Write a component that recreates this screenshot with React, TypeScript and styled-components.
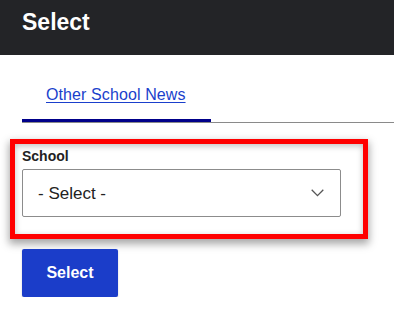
import styled, { createGlobalStyle } from "styled-components";

const GlobalStyle = createGlobalStyle`
  html, body {
    margin: 0;
    padding: 0;
    background: #fff;
    font-family: "Liberation Sans", Arial, sans-serif;
  }
`;

const Header = styled.header`
  box-sizing: border-box;
  height: 55px;
  padding: 9px 22px 0;
  background: #232427;
`;

const Title = styled.h1`
  margin: 0;
  color: #fff;
  font-size: 23px;
  font-weight: 700;
  line-height: 1.15;
`;

const Main = styled.main`
  padding-top: 16px;
`;

const TabList = styled.nav`
  display: flex;
  margin-left: 22px;
  border-bottom: 1px solid #8a8a8a;
`;

const Tab = styled.a<{ active?: boolean }>`
  display: block;
  padding: 12px 25px 12px 24px;
  font-size: 16px;
  line-height: 24px;
  letter-spacing: 0.1px;
  color: #1a3fcc;
  text-decoration: underline;
  text-underline-offset: 2px;
  border-bottom: 3px solid ${(p) => (p.active ? "#00008a" : "transparent")};
  cursor: pointer;
`;

const Highlight = styled.div`
  box-sizing: border-box;
  width: 358px;
  margin: 16px 0 0 10px;
  padding: 2px 22px 17px 7px;
  border: 5px solid #f00;
  box-shadow: 0 4px 8px 1px rgba(0, 0, 0, 0.35),
    inset 0 2px 6px rgba(0, 0, 0, 0.25);
`;

const Label = styled.label`
  display: block;
  margin-bottom: 3px;
  font-size: 14px;
  font-weight: 700;
  line-height: 20px;
  color: #222;
`;

const SelectWrap = styled.div`
  position: relative;
`;

const NativeSelect = styled.select`
  box-sizing: border-box;
  width: 100%;
  height: 48px;
  padding: 0 40px 0 15px;
  border: 1px solid #8c8c8c;
  border-radius: 2px;
  background: #fff;
  appearance: none;
  font-family: "Liberation Sans", Arial, sans-serif;
  font-size: 17px;
  color: #222;
`;

const Chevron = styled.svg`
  position: absolute;
  right: 17px;
  top: 50%;
  margin-top: -4px;
  pointer-events: none;
`;

const Button = styled.button`
  display: block;
  margin: 10px 0 0 22px;
  width: 96px;
  height: 48px;
  padding: 0;
  border: none;
  border-radius: 2px;
  background: #1b3dc9;
  color: #fff;
  font-family: "Liberation Sans", Arial, sans-serif;
  font-size: 16px;
  font-weight: 700;
  box-shadow: 0 1px 2px rgba(0, 0, 0, 0.2);
  cursor: pointer;
`;

const App = () => {
  return (
    <>
      <GlobalStyle />
      <Header>
        <Title>Select</Title>
      </Header>
      <Main>
        <TabList>
          <Tab active>Other School News</Tab>
        </TabList>
        <Highlight>
          <Label htmlFor="school">School</Label>
          <SelectWrap>
            <NativeSelect id="school" defaultValue="">
              <option value="">- Select -</option>
            </NativeSelect>
            <Chevron width="13" height="8" viewBox="0 0 13 8">
              <path d="M0.7 0.8 L6.5 6.6 L12.3 0.8" fill="none" stroke="#555" strokeWidth="1.3" />
            </Chevron>
          </SelectWrap>
        </Highlight>
        <Button>Select</Button>
      </Main>
    </>
  );
};

export default App;
